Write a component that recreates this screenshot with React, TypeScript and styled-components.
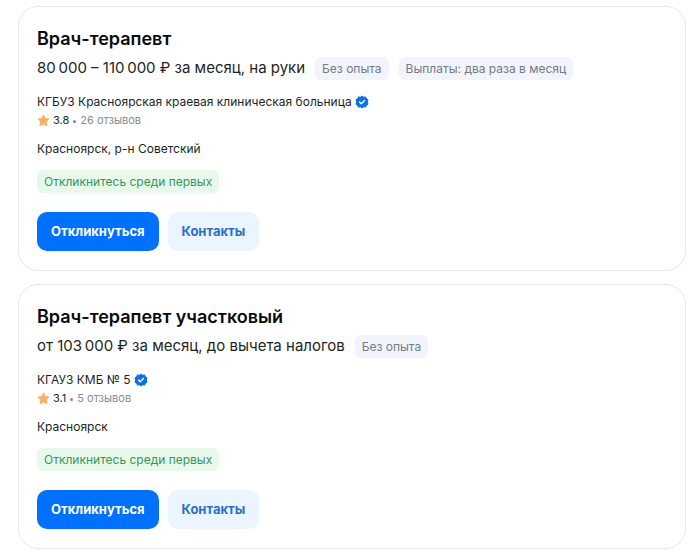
import React from "react";
import styled, { createGlobalStyle } from "styled-components";

const Global = createGlobalStyle`
  * { box-sizing: border-box; }
  body { margin: 0; background: #fff; color: #1d1f24; font-family: Inter, "Noto Sans", sans-serif; }
  h2, p { margin: 0; }
`;

const List = styled.main`
  display: flex;
  flex-direction: column;
  gap: 13px;
  padding: 6px 14px 7px 18px;
`;

const Card = styled.article`
  display: flex;
  flex-direction: column;
  align-items: flex-start;
  padding: 18px 18px 19px;
  border: 1px solid #e6e8ec;
  border-radius: 20px;
`;

const Title = styled.h2`
  color: #08090b;
  font-weight: 600;
  font-size: 18px;
  line-height: 28px;
`;

const PayRow = styled.div`
  display: flex;
  align-items: center;
  flex-wrap: wrap;
  gap: 10px;
  margin-top: 3px;
`;

const Pay = styled.p`
  font-size: 15px;
  line-height: 24px;
`;

const Tag = styled.span`
  padding: 0 7px;
  border-radius: 6px;
  background: #f1f4fa;
  color: #747b87;
  font-size: 12px;
  line-height: 23px;
`;

const Company = styled.a`
  display: flex;
  align-items: center;
  gap: 3px;
  margin-top: 13px;
  color: inherit;
  text-decoration: none;
  font-size: 12px;
  line-height: 18px;
`;

const Rating = styled.div`
  display: flex;
  align-items: center;
  gap: 3px;
  font-size: 11px;
  line-height: 18px;
`;

const Dot = styled.span`
  width: 3px;
  height: 3px;
  margin: 2px 1px 0;
  border-radius: 50%;
  background: #858b95;
`;

const Reviews = styled.a`
  color: #858b95;
  text-decoration: none;
`;

const Place = styled.p`
  margin-top: 11px;
  font-size: 12px;
  line-height: 18px;
`;

const Hint = styled.p`
  margin-top: 12px;
  padding: 0 7px;
  border-radius: 6px;
  background: #e8f8ea;
  color: #37965c;
  font-size: 12px;
  line-height: 23px;
`;

const Actions = styled.div`
  display: flex;
  gap: 9px;
  margin-top: 19px;
`;

const Button = styled.button<{ $primary?: boolean }>`
  height: 39px;
  padding: 0 14px 2px;
  border: 0;
  border-radius: 10px;
  background: ${(p) => (p.$primary ? "#0070ff" : "#ebf5ff")};
  color: ${(p) => (p.$primary ? "#fff" : "#2b6fcb")};
  font-family: inherit;
  font-weight: 700;
  font-size: 13px;
  line-height: 20px;
  cursor: pointer;
`;

const Icon = styled.svg`
  flex: none;
  display: block;
`;

const Star = () => (
  <Icon width="13" height="13" viewBox="0 0 13 13" aria-hidden="true">
    <path
      d="M6.5 .9 8.2 4.5 12.1 5 9.3 7.8 10 11.8 6.5 9.9 3 11.8 3.7 7.8 .9 5 4.8 4.5Z"
      fill="#fbb067"
      stroke="#fbb067"
      strokeWidth="1"
      strokeLinejoin="round"
    />
  </Icon>
);

const Verified = () => (
  <Icon width="14" height="14" viewBox="0 0 14 14" role="img" aria-label="Проверено">
    <path
      d="M7 1 8.6 2.2 10.6 1.9 11.3 3.7 13 4.8 12.4 7 13 9.2 11.3 10.3 10.6 12.1 8.6 11.8 7 13 5.4 11.8 3.4 12.1 2.7 10.3 1 9.2 1.6 7 1 4.8 2.7 3.7 3.4 1.9 5.4 2.2Z"
      fill="#0870e8"
      stroke="#0870e8"
      strokeWidth="1"
      strokeLinejoin="round"
    />
    <path
      d="M4.5 7.1 6.2 8.7 9.5 5.5"
      fill="none"
      stroke="#fff"
      strokeWidth="1.4"
      strokeLinecap="round"
      strokeLinejoin="round"
    />
  </Icon>
);

interface Vacancy {
  title: string;
  pay: string;
  tags: string[];
  company: string;
  rating: string;
  reviews: string;
  place: string;
}

const vacancies: Vacancy[] = [
  {
    title: "Врач-терапевт",
    pay: "80\u2009000 – 110\u2009000 ₽ за месяц, на руки",
    tags: ["Без опыта", "Выплаты: два раза в месяц"],
    company: "КГБУЗ Красноярская краевая клиническая больница",
    rating: "3.8",
    reviews: "26 отзывов",
    place: "Красноярск, р-н Советский",
  },
  {
    title: "Врач-терапевт участковый",
    pay: "от 103\u2009000 ₽ за месяц, до вычета налогов",
    tags: ["Без опыта"],
    company: "КГАУЗ КМБ № 5",
    rating: "3.1",
    reviews: "5 отзывов",
    place: "Красноярск",
  },
];

export default function App() {
  return (
    <>
      <Global />
      <List>
        {vacancies.map((v) => (
          <Card key={v.title}>
            <Title>{v.title}</Title>
            <PayRow>
              <Pay>{v.pay}</Pay>
              {v.tags.map((tag) => (
                <Tag key={tag}>{tag}</Tag>
              ))}
            </PayRow>
            <Company href="#">
              {v.company}
              <Verified />
            </Company>
            <Rating>
              <Star />
              {v.rating}
              <Dot />
              <Reviews href="#">{v.reviews}</Reviews>
            </Rating>
            <Place>{v.place}</Place>
            <Hint>Откликнитесь среди первых</Hint>
            <Actions>
              <Button type="button" $primary>Откликнуться</Button>
              <Button type="button">Контакты</Button>
            </Actions>
          </Card>
        ))}
      </List>
    </>
  );
}
